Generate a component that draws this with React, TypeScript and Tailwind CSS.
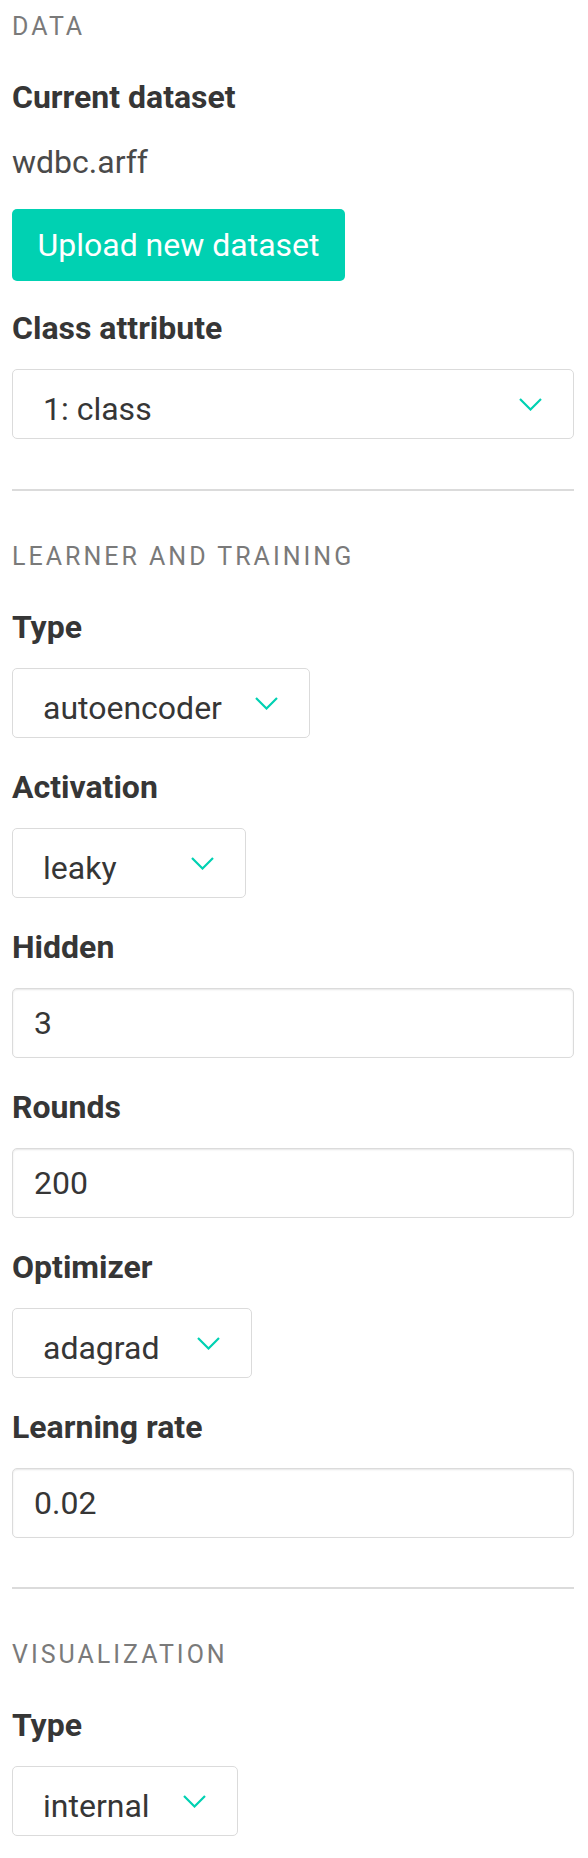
import React from "react";

const Chevron = () => (
  <svg width="23" height="13" viewBox="0 0 23 13" fill="none" className="shrink-0">
    <polyline points="1,1 11.5,11.5 22,1" stroke="#00d1b2" strokeWidth="2.2" />
  </svg>
);

const SectionHeader = ({ children, className = "" }: { children: React.ReactNode; className?: string }) => (
  <div className={`h-[36px] text-[25px] leading-[36px] tracking-[0.12em] text-[#7a7a7a] font-normal uppercase ${className}`}>
    {children}
  </div>
);

const Label = ({ children, className = "" }: { children: React.ReactNode; className?: string }) => (
  <div className={`h-[42px] text-[32px] leading-[42px] font-bold text-[#363636] ${className}`}>{children}</div>
);

const Select = ({ value, widthClass }: { value: string; widthClass: string }) => (
  <div
    className={`mt-[20px] h-[70px] ${widthClass} flex items-center justify-between rounded-[5px] border border-[#dbdbdb] bg-white pl-[30px] pr-[31px]`}
  >
    <span className="pt-[10px] text-[32px] leading-[42px] text-[#363636]">{value}</span>
    <Chevron />
  </div>
);

const Input = ({ value }: { value: string }) => (
  <div className="mt-[20px] h-[70px] w-full flex items-center rounded-[5px] border border-[#dbdbdb] bg-white pl-[21px] shadow-[inset_0_1px_2px_rgba(10,10,10,0.1)]">
    <span className="text-[32px] leading-[42px] text-[#363636]">{value}</span>
  </div>
);

const Field = ({ label, children, first = false }: { label: string; children: React.ReactNode; first?: boolean }) => (
  <div className={first ? "mt-[31px]" : "mt-[28px]"}>
    <Label>{label}</Label>
    {children}
  </div>
);

export default function App() {
  return (
    <div className="w-[588px] bg-white pl-[12px] pr-[14px] pt-[9px] pb-[22px] font-['Roboto','Liberation_Sans',sans-serif]">
      <SectionHeader>Data</SectionHeader>
      <Label className="mt-[31px]">Current dataset</Label>
      <p className="mt-[23px] h-[42px] text-[32px] leading-[42px] text-[#4a4a4a]">wdbc.arff</p>
      <button className="mt-[26px] flex h-[72px] w-[333px] items-center justify-center rounded-[5px] bg-[#00d1b2] text-[32px] leading-[42px] text-white">
        Upload new dataset
      </button>
      <Label className="mt-[26px]">Class attribute</Label>
      <Select value="1: class" widthClass="w-full" />
      <div className="mt-[50px] h-[2px] bg-[#dbdbdb]" />

      <SectionHeader className="mt-[48px]">Learner and training</SectionHeader>
      <Field label="Type" first>
        <Select value="autoencoder" widthClass="w-[298px]" />
      </Field>
      <Field label="Activation">
        <Select value="leaky" widthClass="w-[234px]" />
      </Field>
      <Field label="Hidden">
        <Input value="3" />
      </Field>
      <Field label="Rounds">
        <Input value="200" />
      </Field>
      <Field label="Optimizer">
        <Select value="adagrad" widthClass="w-[240px]" />
      </Field>
      <Field label="Learning rate">
        <Input value="0.02" />
      </Field>
      <div className="mt-[49px] h-[2px] bg-[#dbdbdb]" />

      <SectionHeader className="mt-[48px]">Visualization</SectionHeader>
      <Field label="Type" first>
        <Select value="internal" widthClass="w-[226px]" />
      </Field>
    </div>
  );
}
